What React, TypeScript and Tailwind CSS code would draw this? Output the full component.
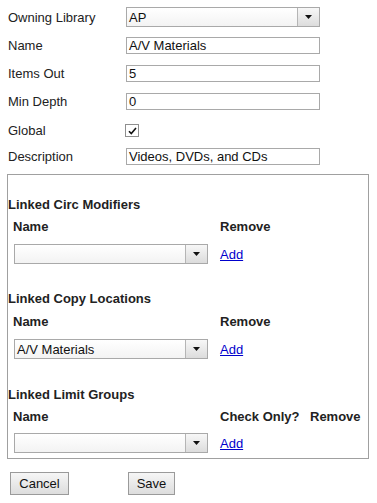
import React from "react";

const font = { fontFamily: '"Liberation Sans", Arial, sans-serif' };

function Arrow() {
  return (
    <svg width="7" height="4" viewBox="0 0 7 4" className="block">
      <path d="M0 0 H7 L3.5 4 Z" fill="#111" />
    </svg>
  );
}

function Select({ value, w, h }: { value: string; w: string; h: string }) {
  return (
    <div className={`flex ${w} ${h} border border-[#a9a9a9] bg-gradient-to-b from-white to-[#f3f3f3]`}>
      <div className="flex-1 flex items-center pl-[2px] text-[13px] text-[#111] leading-none">{value}</div>
      <div className="w-[22px] flex items-center justify-center border-l border-[#b5b5b5] bg-gradient-to-b from-[#f7f7f7] to-[#dcdcdc]">
        <Arrow />
      </div>
    </div>
  );
}

function TextInput({ value, h }: { value: string; h: string }) {
  return (
    <div className={`w-[194px] ${h} border border-[#a9a9a9] bg-white flex items-center pl-[2px] text-[13px] text-[#111] leading-none`}>
      {value}
    </div>
  );
}

function Row({ label, mt, h, children }: { label: string; mt: string; h: string; children: React.ReactNode }) {
  return (
    <div className={`flex items-center ${mt} ${h}`}>
      <div className="w-[126px] pl-[8px] text-[13px] text-[#222] leading-none">{label}</div>
      {children}
    </div>
  );
}

function AddLink() {
  return <span className="text-[13px] text-[#0000cc] underline leading-none">Add</span>;
}

export default function App() {
  return (
    <div className="w-[377px] h-[503px] bg-white overflow-hidden" style={font}>
      <div className="flex flex-col">
        <Row label="Owning Library" mt="mt-[7px]" h="h-[20px]">
          <Select value="AP" w="w-[194px]" h="h-[20px]" />
        </Row>
        <Row label="Name" mt="mt-[10px]" h="h-[17px]">
          <TextInput value="A/V Materials" h="h-[17px]" />
        </Row>
        <Row label="Items Out" mt="mt-[11px]" h="h-[17px]">
          <TextInput value="5" h="h-[17px]" />
        </Row>
        <Row label="Min Depth" mt="mt-[11px]" h="h-[17px]">
          <TextInput value="0" h="h-[17px]" />
        </Row>
        <Row label="Global" mt="mt-[14px]" h="h-[13px]">
          <div className="ml-[-1px] w-[14px] h-[13px] border border-[#8f8f8f] bg-white flex items-center justify-center">
            <svg width="9" height="8" viewBox="0 0 9 8">
              <path d="M1 4.2 L3.3 6.6 L8 1" fill="none" stroke="#111" strokeWidth="1.6" />
            </svg>
          </div>
        </Row>
        <Row label="Description" mt="mt-[11px]" h="h-[16px]">
          <TextInput value="Videos, DVDs, and CDs" h="h-[17px]" />
        </Row>

        <div className="mt-[10px] ml-[7px] w-[362px] h-[285px] border border-[#a0a0a0] flex flex-col">
          <div className="mt-[21px] h-[16px] flex items-center text-[13px] font-bold text-[#222] leading-none">Linked Circ Modifiers</div>
          <div className="mt-[6px] h-[16px] flex items-center text-[13px] font-bold text-[#222] leading-none">
            <div className="w-[212px] pl-[5px]">Name</div>
            <div>Remove</div>
          </div>
          <div className="mt-[10px] h-[20px] flex items-center">
            <div className="pl-[6px] w-[212px]">
              <Select value="" w="w-[194px]" h="h-[20px]" />
            </div>
            <AddLink />
          </div>

          <div className="mt-[26px] h-[16px] flex items-center text-[13px] font-bold text-[#222] leading-none">Linked Copy Locations</div>
          <div className="mt-[7px] h-[16px] flex items-center text-[13px] font-bold text-[#222] leading-none">
            <div className="w-[212px] pl-[5px]">Name</div>
            <div>Remove</div>
          </div>
          <div className="mt-[10px] h-[20px] flex items-center">
            <div className="pl-[6px] w-[212px]">
              <Select value="A/V Materials" w="w-[194px]" h="h-[20px]" />
            </div>
            <AddLink />
          </div>

          <div className="mt-[27px] h-[16px] flex items-center text-[13px] font-bold text-[#222] leading-none">Linked Limit Groups</div>
          <div className="mt-[6px] h-[16px] flex items-center text-[13px] font-bold text-[#222] leading-none">
            <div className="w-[212px] pl-[5px]">Name</div>
            <div className="w-[90px]">Check Only?</div>
            <div>Remove</div>
          </div>
          <div className="mt-[9px] h-[20px] flex items-center">
            <div className="pl-[6px] w-[212px]">
              <Select value="" w="w-[194px]" h="h-[20px]" />
            </div>
            <AddLink />
          </div>
        </div>

        <div className="mt-[13px] flex items-center">
          <div className="ml-[10px] w-[59px] h-[23px] border border-[#9a9a9a] bg-gradient-to-b from-[#f6f6f6] to-[#dddddd] flex items-center justify-center text-[13px] text-[#111] leading-none">Cancel</div>
          <div className="ml-[59px] w-[47px] h-[23px] border border-[#9a9a9a] bg-gradient-to-b from-[#f6f6f6] to-[#dddddd] flex items-center justify-center text-[13px] text-[#111] leading-none">Save</div>
        </div>
      </div>
    </div>
  );
}
